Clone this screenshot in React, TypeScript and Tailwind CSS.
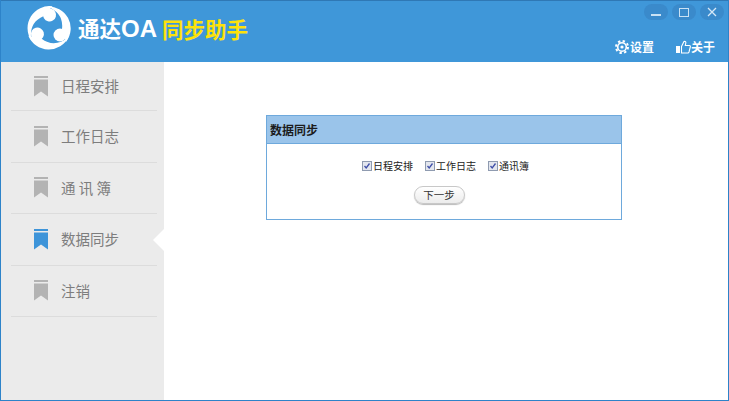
import React from "react";

const font = { fontFamily: '"Noto Sans CJK SC", "Liberation Sans", sans-serif' };

function Bookmark({ color }: { color: string }) {
  return (
    <svg width="14" height="21" viewBox="0 0 14 21" className="shrink-0">
      <rect x="0" y="0" width="14" height="2" fill={color} />
      <path d="M0 3.500H14V20.500L7 15.500L0 20.500Z" fill={color} />
    </svg>
  );
}

function Blade({ angle }: { angle: number }) {
  return (
    <g transform={`rotate(${angle})`} fill="#fff">
      <path d="M-2 -21.500A22 22 0 0 1 17 14L13 1Q15 -15 -2 -21.500Z" />
      <circle cx="11" cy="7" r="6.500" />
    </g>
  );
}

function Logo() {
  return (
    <svg width="46" height="46" viewBox="-23 -23 46 46" className="shrink-0">
      <Blade angle={0} />
      <Blade angle={120} />
      <Blade angle={240} />
    </svg>
  );
}

function Gear() {
  return (
    <svg width="14" height="14" viewBox="0 0 14 14" className="shrink-0">
      <circle cx="7" cy="7" r="6" fill="none" stroke="#fff" strokeWidth="2" strokeDasharray="2.350 2.350" />
      <circle cx="7" cy="7" r="4.300" fill="none" stroke="#fff" strokeWidth="1.600" />
      <circle cx="7" cy="7" r="1.600" fill="#fff" />
    </svg>
  );
}

function Thumb() {
  return (
    <svg width="15" height="14" viewBox="0 0 15 14" className="shrink-0">
      <rect x="0" y="6" width="4" height="7" fill="#fff" />
      <path d="M5.500 6.500L8 1.500c1.200-.5 2 .3 1.800 1.500L9.300 5.500H13.500c.8 0 1 .8.800 1.500L13 12c-.2.600-.6 1-1.200 1H5.500Z" fill="none" stroke="#fff" strokeWidth="1.100" />
    </svg>
  );
}

function WinBtn({ children }: { children: React.ReactNode }) {
  return (
    <div className="flex h-[16px] w-[24px] items-center justify-center rounded-full bg-[#3a8acb]">
      {children}
    </div>
  );
}

function NavItem({ label, active, first }: { label: string; active?: boolean; first?: boolean }) {
  return (
    <div className={`relative ml-[10px] mr-[7px] flex items-center gap-[13px] border-b border-[#dcdcdc] pl-[23px] ${first ? "h-[49px]" : "h-[51.500px]"}`}>
      <Bookmark color={active ? "#3d94d9" : "#b3b3b3"} />
      <span className="text-[14.500px] leading-none text-[#7d7d7d]">{label}</span>
      {active && (
        <span className="absolute right-[-7px] top-[15px] h-0 w-0 border-y-[11px] border-r-[11px] border-y-transparent border-r-white" />
      )}
    </div>
  );
}

function Check({ label }: { label: string }) {
  return (
    <label className="flex items-center gap-px">
      <span className="flex h-[10px] w-[10px] items-center justify-center border border-[#8f9bb0] bg-[#e3e6ee]">
        <svg width="8" height="8" viewBox="0 0 8 8">
          <path d="M1.500 4L3.200 6L6.500 1.500" fill="none" stroke="#3f4fa8" strokeWidth="1.300" />
        </svg>
      </span>
      <span className="text-[10px] leading-none text-[#222]">{label}</span>
    </label>
  );
}

export default function App() {
  return (
    <div style={font} className="flex h-[401px] w-[729px] flex-col overflow-hidden border-x border-b border-[#2d83c9] bg-white">
      <header className="flex h-[62px] shrink-0 items-start justify-between border-t border-[#2f78b5] bg-[#3f97d9]">
        <div className="ml-[25px] mt-[4px] flex items-center">
          <Logo />
          <span className="ml-[6px] mt-[1px] text-[21.500px] font-bold leading-none text-white">
            通达<span className="text-[24px]" style={{ fontFamily: '"Liberation Sans", sans-serif' }}>OA</span>
          </span>
          <span className="ml-[5px] mt-[1px] text-[21.500px] font-bold leading-none text-[#fde20a]">同步助手</span>
        </div>
        <div className="mr-[4px] mt-[3px] flex flex-col items-end">
          <div className="flex gap-[4px]">
            <WinBtn><span className="mt-[6px] h-[2px] w-[10px] bg-[#c9e1f4]" /></WinBtn>
            <WinBtn><span className="h-[9px] w-[10px] border border-[#c9e1f4]" /></WinBtn>
            <WinBtn>
              <svg width="10" height="10" viewBox="0 0 10 10">
                <path d="M1 1L9 9M9 1L1 9" stroke="#d5e8f7" strokeWidth="1.300" />
              </svg>
            </WinBtn>
          </div>
          <div className="mr-[9px] mt-[20px] flex items-center text-[12px] font-bold leading-none text-white">
            <Gear />
            <span className="ml-px">设置</span>
            <span className="ml-[22px]"><Thumb /></span>
            <span>关于</span>
          </div>
        </div>
      </header>
      <div className="flex min-h-0 flex-1">
        <aside className="w-[163px] shrink-0 bg-[#ebebeb]">
          <NavItem label="日程安排" first />
          <NavItem label="工作日志" />
          <NavItem label="通 讯 簿" />
          <NavItem label="数据同步" active />
          <NavItem label="注销" />
        </aside>
        <main className="flex-1 pl-[102px] pt-[53px]">
          <section className="h-[105px] w-[356px] border border-[#6ea9dc]">
            <h2 className="flex h-[28px] items-center border-b border-[#6ea9dc] bg-[#9ac4ea] pl-[3px] text-[12px] font-bold leading-none text-[#1c1c1c]">
              数据同步
            </h2>
            <div className="flex flex-col items-center pt-[17px]">
              <div className="ml-[3px] flex gap-[12px]">
                <Check label="日程安排" />
                <Check label="工作日志" />
                <Check label="通讯簿" />
              </div>
              <button className="mr-[10px] mt-[15px] h-[18px] w-[51px] rounded-full border border-[#c8c8c8] bg-gradient-to-b from-white to-[#ececec] text-[10.500px] leading-none text-[#333] shadow-[0_1px_1px_#bbb]">
                下一步
              </button>
            </div>
          </section>
        </main>
      </div>
    </div>
  );
}
